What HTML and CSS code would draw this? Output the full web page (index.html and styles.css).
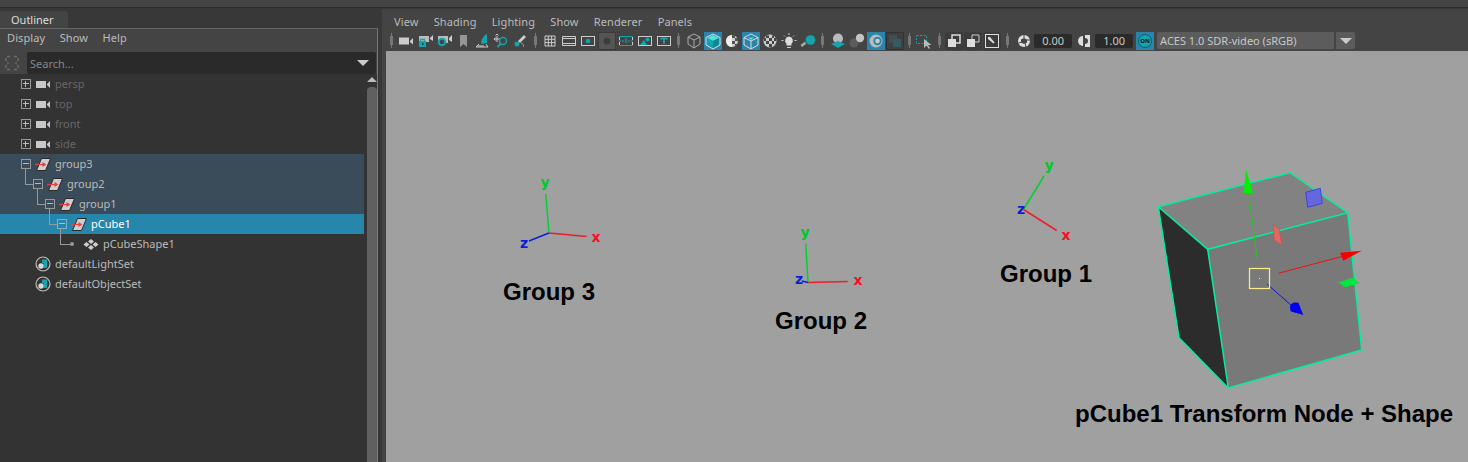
FILE: index.html
```html
<!DOCTYPE html>
<html>
  <head>
    <title>Outliner and viewport</title>
    <link rel="stylesheet" href="styles.css">
  </head>
  <body>
    <svg class="defs" width="0" height="0">
      <symbol id="camera" viewBox="0 0 15 9">
        <rect x="0" y="1" width="10" height="7" fill="#c8c8c8"/>
        <path d="M11 4 14 1V8L11 5Z" fill="#c8c8c8"/>
      </symbol>
      <symbol id="transform" viewBox="0 0 16 13">
        <path d="M6.500 .5H15.500L10.500 12.500H1.500Z" fill="#cfcfcf" stroke="#2a2a2a"/>
        <path d="M0 6.500H8" stroke="#e8403e" stroke-width="1.300"/>
        <path d="M7.500 4 11.500 6.500 7.500 9Z" fill="#e8403e"/>
      </symbol>
      <symbol id="shape" viewBox="0 0 16 11">
        <path d="M8 0 11 2.500 8 5 5 2.500ZM3.500 3 6.500 5.500 3.500 8 .5 5.500ZM12.500 3 15.500 5.500 12.500 8 9.500 5.500ZM8 6 11 8.500 8 11 5 8.500Z" fill="#cfcfcf"/>
      </symbol>
      <symbol id="set" viewBox="0 0 16 16">
        <circle cx="8" cy="8" r="7" fill="#333" stroke="#bdbdbd" stroke-width="1.200"/>
        <path d="M7 3.500H12V12H8.500V7H7Z" fill="#17a5ad"/>
        <circle cx="6" cy="10" r="2.700" fill="#d6d6d6"/>
      </symbol>
    </svg>

    <div class="topbar"></div>

    <div class="workspace">
      <div class="outliner">
        <div class="tabs">
          <div class="tab">Outliner</div>
        </div>
        <div class="panel">
          <div class="menu menu-left">
            <span>Display</span>
            <span>Show</span>
            <span>Help</span>
          </div>
          <div class="search-row">
            <div class="search-icon">
              <svg width="16" height="16" viewBox="0 0 16 16">
                <path d="M3 1.500H6M10 1.500H13M3 14.500H6M10 14.500H13M2 3V6M14 3V6M2 10V13M14 10V13" stroke="#6a6a6a" stroke-width="1.500"/>
                <path d="M3 6 6 8 3 10ZM13 6 10 8 13 10Z" fill="#5a5a5a"/>
              </svg>
            </div>
            <div class="search-field">
              <span>Search...</span>
              <i class="arrow-down"></i>
            </div>
          </div>
          <div class="tree-wrap">
            <div class="tree">
              <div class="row level-0 dim">
                <span class="box plus"></span>
                <svg class="ico-cam"><use href="#camera"/></svg>
                <span class="label">persp</span>
              </div>
              <div class="row level-0 dim">
                <span class="box plus"></span>
                <svg class="ico-cam"><use href="#camera"/></svg>
                <span class="label">top</span>
              </div>
              <div class="row level-0 dim">
                <span class="box plus"></span>
                <svg class="ico-cam"><use href="#camera"/></svg>
                <span class="label">front</span>
              </div>
              <div class="row level-0 dim">
                <span class="box plus"></span>
                <svg class="ico-cam"><use href="#camera"/></svg>
                <span class="label">side</span>
              </div>
              <div class="row level-0 parent">
                <span class="box minus"></span>
                <svg class="ico-xform"><use href="#transform"/></svg>
                <span class="label">group3</span>
              </div>
              <div class="row level-1 parent">
                <span class="box minus elbow"></span>
                <svg class="ico-xform"><use href="#transform"/></svg>
                <span class="label">group2</span>
              </div>
              <div class="row level-2 parent">
                <span class="box minus elbow"></span>
                <svg class="ico-xform"><use href="#transform"/></svg>
                <span class="label">group1</span>
              </div>
              <div class="row level-3 selected">
                <span class="box minus elbow"></span>
                <svg class="ico-xform"><use href="#transform"/></svg>
                <span class="label">pCube1</span>
              </div>
              <div class="row level-4">
                <span class="leaf"></span>
                <svg class="ico-shape"><use href="#shape"/></svg>
                <span class="label">pCubeShape1</span>
              </div>
              <div class="row level-set">
                <svg class="ico-set"><use href="#set"/></svg>
                <span class="label">defaultLightSet</span>
              </div>
              <div class="row level-set">
                <svg class="ico-set"><use href="#set"/></svg>
                <span class="label">defaultObjectSet</span>
              </div>
            </div>
            <div class="scrollbar">
              <i class="arrow-up"></i>
              <div class="thumb"></div>
            </div>
          </div>
        </div>
      </div>

      <div class="view-panel">
        <div class="menu menu-view">
          <span>View</span>
          <span>Shading</span>
          <span>Lighting</span>
          <span>Show</span>
          <span>Renderer</span>
          <span>Panels</span>
        </div>

        <div class="toolbar">
          <i class="sep"></i>
          <svg class="tool" viewBox="0 0 18 18"><rect x="2" y="5.500" width="10" height="7" fill="#ccc"/><path d="M13 9 16 6V12.500L13 10Z" fill="#ccc"/></svg>
          <svg class="tool" viewBox="0 0 18 18"><rect x="3" y="4" width="10" height="6" fill="#bbb"/><path d="M14 6 17 3V9L14 7Z" fill="#ccc"/><rect x="3" y="9" width="7" height="6" fill="#12a5ad"/><path d="M4.500 9V7.500H8.500V9" fill="none" stroke="#12a5ad" stroke-width="1.300"/><rect x="6" y="11" width="1.500" height="2" fill="#333"/></svg>
          <svg class="tool" viewBox="0 0 18 18"><rect x="3" y="4" width="10" height="7" fill="#bbb"/><path d="M14 6 17 3V10L14 8Z" fill="#ccc"/><circle cx="7" cy="10" r="3.300" fill="#444" stroke="#12a5ad" stroke-width="2"/></svg>
          <svg class="tool" viewBox="0 0 18 18"><path d="M6 3H13V15L9.500 12 6 15Z" fill="#969696"/></svg>
          <svg class="tool" viewBox="0 0 18 18"><path d="M14 2V11L8 12C8 8 10 4 14 2Z" fill="#12a5ad"/><path d="M6 12 3 15H15L13 12" fill="none" stroke="#ccc"/><path d="M5 14H11" stroke="#ccc"/></svg>
          <svg class="tool" viewBox="0 0 18 18"><path d="M2 7H8M5 4V10M2 7 3.500 5.500M2 7 3.500 8.500M5 2 6.500 3.500M5 2 3.500 3.500" stroke="#ccc" fill="none"/><circle cx="11" cy="9" r="3.500" fill="none" stroke="#12a5ad" stroke-width="1.500"/><path d="M8.500 12 5.500 15" stroke="#12a5ad" stroke-width="1.800"/></svg>
          <svg class="tool" viewBox="0 0 18 18"><path d="M13 3 15 5 9 11 7 9Z" fill="#ccc"/><circle cx="6" cy="12" r="2.500" fill="#12a5ad"/><path d="M10 11C13 12 13 14 12 15" stroke="#aaa" fill="none"/></svg>
          <i class="sep"></i>
          <svg class="tool" viewBox="0 0 18 18"><path d="M4 4H14V14H4ZM7.300 4V14M10.600 4V14M4 7.300H14M4 10.600H14" fill="none" stroke="#ccc"/></svg>
          <svg class="tool" viewBox="0 0 18 18"><path d="M2.500 4.500H15.500V13.500H2.500ZM2.500 6.500H15.500M2.500 11.500H15.500" fill="none" stroke="#ccc"/></svg>
          <svg class="tool" viewBox="0 0 18 18"><rect x="2.500" y="4.500" width="13" height="9" fill="none" stroke="#ccc"/><circle cx="9" cy="9" r="2.300" fill="#12a5ad"/></svg>
          <svg class="tool tool-dim" viewBox="0 0 18 18"><circle cx="9" cy="9" r="3.500" fill="#3c3c3c"/></svg>
          <svg class="tool" viewBox="0 0 18 18"><path d="M2.500 4.500H15.500M2.500 13.500H15.500" stroke="#12a5ad"/><path d="M2 9H16M9 6V12" stroke="#12a5ad" stroke-dasharray="2 1"/><path d="M2.500 5V8M15.500 5V8M2.500 10V13M15.500 10V13" stroke="#ccc"/></svg>
          <svg class="tool" viewBox="0 0 18 18"><rect x="2.500" y="4.500" width="13" height="9" fill="none" stroke="#ccc"/><path d="M4 13 8 8 11 13Z" fill="#12a5ad"/><circle cx="11.500" cy="7.500" r="2" fill="#12a5ad"/></svg>
          <svg class="tool" viewBox="0 0 18 18"><rect x="2.500" y="4.500" width="13" height="9" fill="none" stroke="#ccc"/><path d="M5.500 6.500H12.500M9 6.500V12" stroke="#12a5ad" stroke-width="1.800"/></svg>
          <i class="sep"></i>
          <svg class="tool" viewBox="0 0 18 18"><path d="M9 2 15 5V12L9 16 3 12V5ZM3 5 9 8 15 5M9 8V16" fill="none" stroke="#aaa"/></svg>
          <svg class="tool tool-on" viewBox="0 0 18 18"><path d="M9 3 15 6 9 9 3 6Z" fill="#4fe0e6"/><path d="M3 6 9 9V16L3 12.500Z" fill="#12a5ad"/><path d="M15 6 9 9V16L15 12.500Z" fill="#0c8b93"/><path d="M9 2 16 5.500V13L9 17 2 13V5.500Z" fill="none" stroke="#ddd"/></svg>
          <svg class="tool" viewBox="0 0 18 18"><circle cx="9" cy="9" r="6" fill="#ccc"/><path d="M9 3A6 6 0 0 0 9 15Z" fill="#eee"/><path d="M9 3H12V6H9ZM12 6H15V9H12ZM9 9H12V12H9ZM12 12H14V14H12Z" fill="#555"/></svg>
          <svg class="tool tool-on" viewBox="0 0 18 18"><path d="M9 2 16 5.500V13L9 17 2 13V5.500ZM2 5.500 9 9 16 5.500M9 9V17" fill="none" stroke="#ddd"/><path d="M6 5.500H12L9 8Z" fill="#4fe0e6"/></svg>
          <svg class="tool" viewBox="0 0 18 18"><circle cx="9" cy="9" r="6.500" fill="#ccc"/><path d="M5 3.500H8V6H5ZM11 3.500H13V6H11ZM8 6H11V9H8ZM3 6H5V9H3ZM13 6H15V9H13ZM5 9H8V12H5ZM11 9H13V12H11ZM8 12H11V15H8Z" fill="#444"/></svg>
          <svg class="tool" viewBox="0 0 18 18"><path d="M9 4.500A4 4 0 0 1 11.500 11.500V13.500H6.500V11.500A4 4 0 0 1 9 4.500Z" fill="#ddd"/><path d="M7 15.500H11M9 1V3M3.500 8.500H1.500M16.500 8.500H14.500M4 3.500 5 4.500M14 3.500 13 4.500" stroke="#ccc"/></svg>
          <svg class="tool" viewBox="0 0 18 18"><circle cx="11.500" cy="8" r="4.800" fill="#12a5ad"/><path d="M1.500 13 6 9.500 7 12 3 15Z" fill="#aaa"/></svg>
          <i class="sep"></i>
          <svg class="tool" viewBox="0 0 18 18"><circle cx="9" cy="6.500" r="5" fill="#bbb"/><path d="M2 12 9 9 16 12 9 16Z" fill="#12a5ad"/></svg>
          <svg class="tool" viewBox="0 0 18 18"><circle cx="6" cy="11" r="4.500" fill="#5c5c5c"/><circle cx="12" cy="6" r="4.200" fill="#c4c4c4"/></svg>
          <svg class="tool tool-on" viewBox="0 0 18 18"><circle cx="9" cy="9" r="6.500" fill="#bbb"/><circle cx="10.500" cy="9" r="4.200" fill="#2b84ab"/><circle cx="10.500" cy="9" r="2.300" fill="#ccc"/></svg>
          <svg class="tool tool-off" viewBox="0 0 18 18"><rect x="3" y="3" width="8" height="8" fill="#3f4f50"/><rect x="7" y="7" width="8" height="8" fill="#365a60"/></svg>
          <i class="sep"></i>
          <svg class="tool" viewBox="0 0 18 18"><path d="M1.500 3.500H11.500V11.500H1.500Z" fill="none" stroke="#12a5ad" stroke-dasharray="2 1.500"/><path d="M9 7 9 16 11.500 13.500 14 17 15 16 13 13H16.500Z" fill="#bbb"/></svg>
          <i class="sep"></i>
          <svg class="tool tool-box" viewBox="0 0 18 18"><path d="M7 3H15V11H7Z" fill="none" stroke="#ddd" stroke-width="1.500"/><path d="M3 7H11V15H3Z" fill="#ddd"/></svg>
          <svg class="tool tool-box" viewBox="0 0 18 18"><path d="M8 3H15V10H8Z" fill="none" stroke="#ccc"/><path d="M3 7H11V15H3Z" fill="#ddd"/></svg>
          <svg class="tool tool-box" viewBox="0 0 18 18"><rect x="2.500" y="2.500" width="13" height="13" fill="none" stroke="#ddd"/><path d="M5 5 7 5 12 11 11 12 5 7Z" fill="#ddd"/><circle cx="12" cy="12" r="1.500" fill="#333"/></svg>
          <i class="sep"></i>
          <svg class="tool tool-wide" viewBox="0 0 18 18"><circle cx="9" cy="9" r="6" fill="#ddd"/><path d="M9 6 12 7.500V10.500L9 12 6 10.500V7.500Z" fill="#444"/><path d="M9 3V6M15 8 12 8M11 15 10 11M3.500 11 7 10" stroke="#444"/></svg>
          <div class="num">0.00</div>
          <svg class="tool" viewBox="0 0 18 18"><path d="M8 4A5 5 0 0 0 8 14Z" fill="#ddd"/><path d="M10 3H15V15H10V12A3 3 0 0 0 10 6Z" fill="#ddd"/></svg>
          <div class="num num-plain">1.00</div>
          <div class="cm-btn"><span>ON</span></div>
          <div class="cm-select">ACES 1.0 SDR-video (sRGB)</div>
          <div class="cm-arrow"><i class="arrow-down"></i></div>
        </div>

        <div class="viewport">
          <svg class="scene" viewBox="386 51 1082 411">
            <!-- group 3 -->
            <path class="axis" d="M549 233 586.500 236.500" stroke="#f01c2c"/>
            <path class="axis" d="M549 233 545.700 194" stroke="#00d030"/>
            <path class="axis" d="M549 233 529 241" stroke="#0a20e0"/>
            <text class="axis-label" x="596" y="242" fill="#ff0a1e">x</text>
            <text class="axis-label" x="545" y="187" fill="#00c828">y</text>
            <text class="axis-label" x="524" y="248" fill="#0a1ed8">z</text>
            <text class="caption" x="503" y="300">Group 3</text>

            <!-- group 2 -->
            <path class="axis" d="M808 282.500 847.700 281.500" stroke="#f01c2c"/>
            <path class="axis" d="M808 282.500 805.700 243.500" stroke="#00d030"/>
            <path class="axis" d="M808 282.500 801.700 281" stroke="#0a20e0"/>
            <text class="axis-label" x="858" y="285" fill="#ff0a1e">x</text>
            <text class="axis-label" x="805" y="237" fill="#00c828">y</text>
            <text class="axis-label" x="799" y="284" fill="#0a1ed8">z</text>
            <text class="caption" x="775" y="329">Group 2</text>

            <!-- group 1 -->
            <path class="axis" d="M1023.500 209.500 1056.700 230.500" stroke="#f01c2c"/>
            <path class="axis" d="M1023.500 209.500 1044 176" stroke="#00d030"/>
            <text class="axis-label" x="1066" y="240" fill="#ff0a1e">x</text>
            <text class="axis-label" x="1049" y="170" fill="#00c828">y</text>
            <text class="axis-label" x="1021" y="214" fill="#0a1ed8">z</text>
            <text class="caption" x="1000" y="282">Group 1</text>

            <!-- cube -->
            <path d="M1158.300 206.700 1290 172.700 1347.700 212.700 1207.700 249.300Z" fill="#828282"/>
            <path d="M1207.700 249.300 1347.700 212.700 1361.700 350 1228.300 388Z" fill="#797979"/>
            <path d="M1158.300 206.700 1207.700 249.300 1228.300 388 1179 337.700Z" fill="#2c2c2c"/>
            <path class="edge" d="M1158.300 206.700 1290 172.700 1347.700 212.700 1361.700 350 1228.300 388 1179 337.700ZM1158.300 206.700 1207.700 249.300 1347.700 212.700M1207.700 249.300 1228.300 388"/>

            <!-- manipulator -->
            <path d="M1305.700 192.300 1320.300 188.300 1322.300 203.300 1307.700 207.300Z" fill="#6568dc" stroke="#2a38f0" stroke-width=".8"/>
            <path d="M1273.300 224 1279.300 230 1281.700 245 1274.300 240Z" fill="#e06a62" stroke="#f04040" stroke-width=".6"/>
            <path d="M1338.300 282.300 1353.300 277.700 1359.300 283.300 1345 287.300Z" fill="#00e83c"/>
            <path class="axis-thin" d="M1257.300 259.300 1248.300 190" stroke="#20c820"/>
            <path d="M1246 169.300 1253 193.300 1243.700 193.300Z" fill="#00f000"/>
            <path class="axis-thin" d="M1278.300 273.300 1342 256.500" stroke="#f01010"/>
            <path d="M1361.700 250.700 1340 252.700 1343.300 260.700Z" fill="#f80000"/>
            <path class="axis-thin" d="M1267.300 284.300 1291 305" stroke="#1010e0"/>
            <circle cx="1295" cy="307.500" r="5" fill="#0000f0"/>
            <path d="M1303.300 315 1290 311 1298 302Z" fill="#0000f0"/>
            <rect x="1249.500" y="268.500" width="20" height="20" fill="none" stroke="#ffee88" stroke-width="1.200"/>
            <rect x="1259" y="278" width="1" height="1" fill="#ffee66"/>

            <text class="caption" x="1075" y="422">pCube1 Transform Node + Shape</text>
          </svg>
        </div>
      </div>
    </div>
  </body>
</html>
```

FILE: styles.css
```css
* {
  box-sizing: border-box;
}

body {
  margin: 0;
  width: 1468px;
  height: 462px;
  overflow: hidden;
  display: flex;
  flex-direction: column;
  background: #383838;
  color: #bbb;
  font-family: "Noto Sans", sans-serif;
  font-size: 11px;
}

.defs {
  position: absolute;
}

.topbar {
  height: 8px;
  flex-shrink: 0;
  background: #444;
  border-bottom: 1px solid #2c2c2c;
}

.workspace {
  flex: 1;
  display: flex;
  min-height: 0;
}

/* outliner */

.outliner {
  width: 378px;
  display: flex;
  flex-direction: column;
  flex-shrink: 0;
}

.tabs {
  height: 20px;
  padding-top: 3px;
  flex-shrink: 0;
}

.tab {
  width: 68px;
  height: 17px;
  padding-left: 11px;
  line-height: 18px;
  background: #444;
  border-radius: 0 3px 0 0;
  color: #ddd;
}

.panel {
  flex: 1;
  display: flex;
  flex-direction: column;
  min-height: 0;
  border-top: 1px solid #666;
  border-right: 1px solid #777;
}

.menu {
  display: flex;
  align-items: center;
  flex-shrink: 0;
  background: #444;
  letter-spacing: .1px;
}

.menu-left {
  height: 23px;
  padding: 0 0 7px 7px;
  gap: 14.500px;
}

.search-row {
  height: 22px;
  display: flex;
  flex-shrink: 0;
  background: #444;
}

.search-icon {
  width: 27px;
  padding: 3px 0 0 4px;
}

.search-field {
  flex: 1;
  margin-right: 1px;
  padding: 0 7px 0 3px;
  display: flex;
  align-items: center;
  justify-content: space-between;
  background: #2a2a2a;
  border-radius: 2px;
  color: #888;
}

.arrow-down {
  width: 0;
  height: 0;
  border-left: 6px solid transparent;
  border-right: 6px solid transparent;
  border-top: 6px solid #ccc;
}

.tree-wrap {
  flex: 1;
  display: flex;
  min-height: 0;
  background: #333;
}

.tree {
  width: 364px;
  flex-shrink: 0;
}

.row {
  height: 20px;
  display: flex;
  align-items: center;
}

.level-0 {
  padding-left: 21px;
}

.level-1 {
  padding-left: 33px;
}

.level-2 {
  padding-left: 45px;
}

.level-3 {
  padding-left: 57px;
}

.level-4 {
  padding-left: 69px;
}

.level-set {
  padding-left: 35px;
}

.parent {
  background: #3a4b5a;
}

.selected {
  background: #2786ac;
}

.selected .label {
  color: #fff;
}

.dim .label {
  color: #666;
}

.box {
  position: relative;
  width: 10px;
  height: 10px;
  flex-shrink: 0;
  border: 1px solid #999;
}

.selected .box {
  border-color: #7fb4c9;
}

.box::after {
  content: "";
  position: absolute;
  left: 1px;
  right: 1px;
  top: 3px;
  border-bottom: 1px solid #bbb;
}

.plus::before {
  content: "";
  position: absolute;
  top: 1px;
  bottom: 1px;
  left: 3px;
  border-left: 1px solid #bbb;
}

.elbow::before,
.leaf::before {
  content: "";
  position: absolute;
  left: -9px;
  top: -11px;
  width: 8px;
  height: 15px;
  border-left: 1px solid #999;
  border-bottom: 1px solid #999;
}

.leaf {
  position: relative;
  width: 4px;
  height: 4px;
  margin-left: 1px;
  flex-shrink: 0;
  background: #999;
  border-radius: 50%;
}

.leaf::before {
  left: -10px;
  top: -14px;
  width: 9px;
  height: 16px;
}

.ico-cam {
  width: 15px;
  height: 9px;
  margin-left: 5px;
}

.ico-xform {
  width: 16px;
  height: 13px;
  margin-left: 4px;
}

.ico-shape {
  width: 16px;
  height: 11px;
  margin-left: 9px;
}

.ico-set {
  width: 16px;
  height: 16px;
}

.label {
  margin: 0 0 2px 4px;
}

.scrollbar {
  flex: 1;
  padding: 3px 0 0 2px;
  display: flex;
  flex-direction: column;
  align-items: center;
}

.arrow-up {
  width: 0;
  height: 0;
  flex-shrink: 0;
  border-left: 5px solid transparent;
  border-right: 5px solid transparent;
  border-bottom: 5px solid #bbb;
}

.thumb {
  flex: 1;
  width: 10px;
  margin-top: 5px;
  background: #606060;
  border-radius: 4px 4px 0 0;
}

/* viewport panel */

.view-panel {
  flex: 1;
  margin-left: 4px;
  margin-top: 1px;
  min-width: 0;
  display: flex;
  flex-direction: column;
  background: #444;
}

.menu-view {
  height: 21px;
  padding: 4px 0 0 12px;
  gap: 15.200px;
}

.toolbar {
  height: 21px;
  margin-left: 4px;
  display: flex;
  align-items: center;
  flex-shrink: 0;
}

.sep {
  width: 10.800px;
  height: 15px;
  flex-shrink: 0;
  background: linear-gradient(#777, #777) center / 3px 9px no-repeat,
    linear-gradient(#777, #777) center / 1px 15px no-repeat;
}

.tool {
  width: 18px;
  height: 18px;
  margin: 0 .5px;
  flex-shrink: 0;
}

.tool-on {
  background: #2b84ab;
}

.tool-dim {
  background: #555;
  box-shadow: inset 0 0 0 1px #3a3a3a;
}

.tool-off {
  background: #3f3f3f;
  box-shadow: inset 0 0 0 1px #333;
}

.tool-box {
  background: #3c3c3c;
  border-radius: 2px;
}

.tool-wide {
  margin-left: 2px;
}

.num {
  width: 38px;
  height: 14px;
  margin: 0 2.500px 0 1px;
  line-height: 14px;
  text-align: center;
  background: #2a2a2a;
  border-radius: 2px;
  color: #c8c8c8;
}

.num-plain {
  margin-left: 1.500px;
  margin-right: 0;
}

.cm-btn {
  width: 18px;
  height: 18px;
  margin-left: 3px;
  display: flex;
  align-items: center;
  justify-content: center;
  background: #2b84ab;
}

.cm-btn span {
  width: 14px;
  height: 14px;
  line-height: 12px;
  text-align: center;
  font-size: 6px;
  font-weight: 700;
  color: #111;
  background: #12a5ad;
  border: 1px solid #0d5f68;
  border-radius: 50%;
}

.cm-select {
  width: 177px;
  height: 17px;
  margin-left: 3px;
  padding-left: 3px;
  line-height: 17px;
  background: #5c5c5c;
  border-radius: 2px 0 0 2px;
  color: #c8c8c8;
}

.cm-arrow {
  width: 19px;
  height: 17px;
  margin-left: 2px;
  display: flex;
  align-items: center;
  justify-content: center;
  background: #5c5c5c;
  border-radius: 0 2px 2px 0;
}

.viewport {
  flex: 1;
  min-height: 0;
  margin-left: 4px;
  background: #a0a0a0;
}

.scene {
  display: block;
  width: 1082px;
  height: 411px;
}

.axis {
  fill: none;
  stroke-width: 1.500;
}

.axis-thin {
  fill: none;
  stroke-width: 1;
}

.edge {
  fill: none;
  stroke: #00f09a;
  stroke-width: 1.500;
}

.axis-label {
  font-family: "DejaVu Sans", sans-serif;
  font-size: 14px;
  font-weight: 700;
  text-anchor: middle;
}

.caption {
  font-family: "Liberation Sans", sans-serif;
  font-weight: 700;
  font-size: 24px;
  fill: #000;
}
```
